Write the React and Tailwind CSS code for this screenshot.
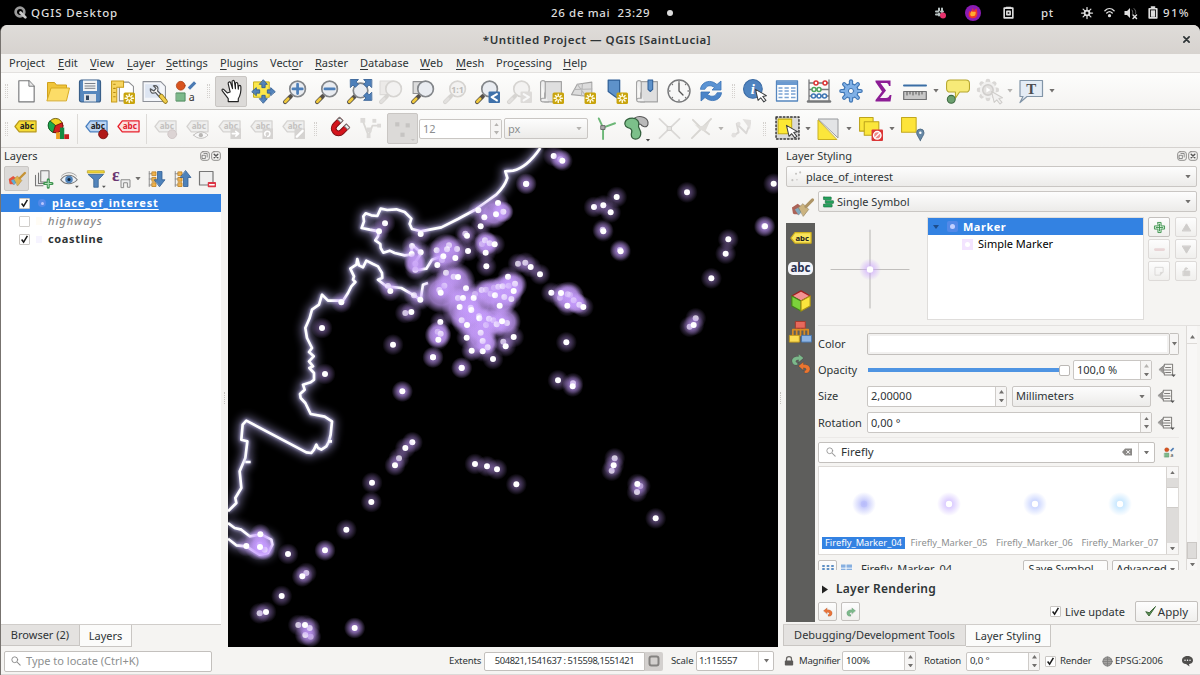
import React from 'react';

/* ---------- primitives ---------- */

function Svg({ children, className = 'h-[25px] w-[25px]', box = '0 0 24 24' }) {
  return (
    <svg viewBox={box} className={'block shrink-0 overflow-visible ' + className} fill="none" strokeLinecap="round" strokeLinejoin="round">
      {children}
    </svg>
  );
}

const Cell = ({ w = 'w-8', children, on }) => (
  <div className={'flex h-[31px] shrink-0 items-center justify-center ' + w + (on ? ' rounded-[2px] border border-[#c9c6c3] bg-[#dcdad8]' : '')}>{children}</div>
);

const Handle = ({ w = 'w-[13px]' }) => (
  <div className={'flex h-[14px] shrink-0 justify-center gap-px ' + w}>
    <div className="border-l border-dotted border-[#d4d1ce]" />
    <div className="border-l border-dotted border-[#d4d1ce]" />
  </div>
);

const Rule = () => (
  <div className="flex h-[30px] w-[5px] shrink-0 justify-center">
    <div className="w-px bg-[#dddbd8]" />
  </div>
);

const Tri = ({ up, dim, big }) => (
  <svg viewBox="0 0 6 4" className={'block shrink-0 ' + (big ? 'h-[3.5px] w-[6px]' : 'h-[3.5px] w-[5px]')}>
    <path d={up ? 'M0 4L3 0L6 4Z' : 'M0 0L3 4L6 0Z'} fill={dim ? '#b5b3b0' : '#72706e'} />
  </svg>
);

const Arrow = ({ w = 'w-[10px]', dim }) => (
  <div className={'flex shrink-0 items-center justify-center ' + w}><Tri dim={dim} big /></div>
);

const Check = ({ on = true }) => (
  <span className={'flex h-[11px] w-[11px] shrink-0 items-center justify-center rounded-[1px] border bg-white ' + (on ? 'border-[#c9c6c3]' : 'border-[#d0cecb]')}>
    {on && (
      <svg viewBox="0 0 10 10" className="h-[9px] w-[9px]" fill="none" stroke="#1b1b1b" strokeWidth="1.7">
        <path d="M1.8 5L4 8L8.2 1" />
      </svg>
    )}
  </span>
);

function Combo({ className, children, dim }) {
  return (
    <div className={'flex shrink-0 items-center justify-between rounded-[2px] border border-[#c9c6c3] bg-linear-to-b from-[#fdfdfd] to-[#ecebe9] pr-[5px] ' + className}>
      <div className="flex items-center">{children}</div>
      <Tri dim={dim} big />
    </div>
  );
}

function Spin({ className, children, dim, upDim }) {
  return (
    <div className={'flex shrink-0 items-stretch overflow-hidden rounded-[2px] border border-[#c9c6c3] bg-white ' + className}>
      <div className="flex flex-1 items-center pl-[3px]">{children}</div>
      <div className="flex w-[11px] flex-col items-center justify-center gap-[5px] border-l border-[#cfccc9] bg-[#f6f5f4]">
        <Tri up dim={dim || upDim} />
        <Tri dim={dim} />
      </div>
    </div>
  );
}

/* ---------- icon pieces ---------- */

const Lens = ({ dim, x = 14, y = 9.5, r = 7.5 }) => (
  <>
    <path d="M2 22L7.5 16.5" stroke={dim ? '#d6d4d1' : '#55504a'} strokeWidth="4" />
    <path d="M2.2 21.8L5 19" stroke={dim ? '#e2e0de' : '#f0c93c'} strokeWidth="2.6" />
    <circle cx={x} cy={y} r={r} fill={dim ? '#f3f2f1' : '#e9ecf1'} stroke={dim ? '#d6d4d1' : '#83868a'} strokeWidth="1.6" />
  </>
);

const Star = ({ x = 13, y = 13 }) => (
  <g transform={'translate(' + x + ' ' + y + ')'}>
    <rect width="11" height="11" rx="1.5" fill="#c9a40d" />
    <path d="M5.5 1.5V9.5M1.5 5.5H9.5M2.8 2.8L8.2 8.2M8.2 2.8L2.8 8.2" stroke="#fffbe0" strokeWidth="1.4" />
    <circle cx="5.5" cy="5.5" r="1.4" fill="#c9a40d" />
  </g>
);

function Tag({ fill, stroke, text = '#222', label = 'abc', children, className = 'h-[23px] w-[23px]' }) {
  return (
    <Svg className={className}>
      <path d="M1 12L5.5 6.200H23V17.500H5.500Z" fill={fill} stroke={stroke} strokeWidth="1.3" />
      <text x="13.3" y="15" fontSize="8.5" fontWeight="700" textAnchor="middle" fill={text} fontFamily="Noto Sans, sans-serif">{label}</text>
      {children}
    </Svg>
  );
}

const GreyTag = ({ children }) => <Tag fill="#efefee" stroke="#d5d3d1" text="#c3c1bf">{children}</Tag>;

const AbstractGlyph = ({ className }) => (
  <Svg className={className}>
    <circle cx="6" cy="6" r="4.6" fill="#d8541f" stroke="#a53b10" strokeWidth=".7" />
    <path d="M14.5 9L21 2.5" stroke="#4c7bb3" strokeWidth="3.4" strokeLinecap="butt" />
    <rect x="1.5" y="13.5" width="9" height="8.5" fill="#7db98a" stroke="#4d8a5c" strokeWidth="1" />
    <text x="14.3" y="22" fontSize="11" fill="#333" fontFamily="Noto Sans, sans-serif">a</text>
  </Svg>
);

const Gear = () => (
  <>
    {[0, 45, 90, 135].map((a) => (
      <path key={a} d="M12 2.300V21.700" transform={'rotate(' + a + ' 12 12)'} stroke="#3f75b3" strokeWidth="4.2" />
    ))}
    <circle cx="12" cy="12" r="7.200" fill="#7fb0e6" stroke="#3f75b3" strokeWidth="1.200" />
    {[0, 45, 90, 135].map((a) => (
      <path key={a} d="M12 2.500V21.500" transform={'rotate(' + a + ' 12 12)'} stroke="#7fb0e6" strokeWidth="2.2" />
    ))}
    <circle cx="12" cy="12" r="2.600" fill="#fafafa" stroke="#3f75b3" />
  </>
);

const Cursor = ({ x, y, dim }) => (
  <path d="M0 0L2.5 10.5L5 8L8 12L10 10.5L7 6.8L10.5 6Z" transform={'translate(' + x + ' ' + y + ')'} fill={dim ? '#f2f1f0' : '#fff'} stroke={dim ? '#cfcdca' : '#3e4042'} strokeWidth="1" />
);

const Abacus = () => (
  <Svg className="h-[24px] w-[24px]">
    <path d="M2 1V22M22 1V22M2 4H22M2 10.5H22M2 17H22" stroke="#77787a" strokeWidth="1.3" />
    <path d="M1 22.5H23" stroke="#77787a" strokeWidth="2.5" />
    {[[9, 4, '#d33'], [18, 4, '#d33'], [7, 10.5, '#4fa35c'], [12, 10.5, '#4fa35c'], [6.5, 17, '#3e76b5'], [12, 17, '#3e76b5'], [17.5, 17, '#3e76b5']].map(([x, y, c]) => (
      <circle key={x + '-' + y} cx={x} cy={y} r="2" fill="#fff" stroke={c} strokeWidth="1.5" />
    ))}
  </Svg>
);

const TableGlyph = () => (
  <Svg className="h-[24px] w-[24px]">
    <rect x="1.5" y="2" width="21" height="20" fill="#fff" stroke="#5586be" strokeWidth="1.3" />
    <rect x="2" y="2.5" width="20" height="3.5" fill="#6b9ad0" />
    <path d="M3.5 9H7.5M3.5 12H7.5M3.5 15H7.5M3.5 18.5H7.5M9.5 9H13.8M9.5 12H13.8M9.5 15H13.8M9.5 18.5H13.8M16 9H20.5M16 12H20.5M16 15H20.5M16 18.5H20.5" stroke="#79a3d3" strokeWidth="1.5" strokeLinecap="butt" />
  </Svg>
);

const Refresh = () => (
  <Svg className="h-[24px] w-[24px]">
    <path d="M1.5 10C2 4 9 .5 15 3.5L18 5.5L22 2V11H13L15.5 8.5C11.5 5.5 7.500 6.500 6 10Z" fill="#5b93d3" stroke="#3a72b5" strokeWidth=".8" />
    <path d="M22.500 14C22 20 15 23.500 9 20.500L6 18.500L2 22V13H11L8.500 15.500C12.500 18.500 16.500 17.500 18 14Z" fill="#4b84c8" stroke="#3a72b5" strokeWidth=".8" />
  </Svg>
);

const Scroll = ({ children }) => (
  <Svg>
    <path d="M5.500 3V22H21.500V2.500H5.500Z" fill="#dfdfdf" stroke="#a3a3a3" strokeWidth="1.100" />
    <path d="M1.500 3.500C1.500 1 6 1 6 3.500V18.500H3.500C1 18.500 1 22 3.500 22H9" fill="#efefef" stroke="#a3a3a3" strokeWidth="1.100" />
    <path d="M1.500 3.500V20" stroke="#a3a3a3" strokeWidth="1.100" />
    {children}
  </Svg>
);

/* ---------- toolbars ---------- */

function MainToolbar() {
  return (
    <div className="flex h-[37px] items-center border-b border-[#c9c7c4] bg-linear-to-b from-[#fdfdfc] to-[#f4f3f1] pl-[2px]">
      <Handle w="w-[7px]" />
      <Cell><Svg className="h-[23px] w-[23px]"><path d="M4 .8H14.500L20 6.500V22.800H4Z" fill="#fff" stroke="#77787a" strokeWidth="1.200" /><path d="M14.500 .8V6.500H20" fill="#e8e8e8" stroke="#77787a" /></Svg></Cell>
      <Cell><Svg className="h-[24px] w-[24px]"><path d="M1.500 20V3.500H8.500L10.500 6H20.500V10" fill="#f0c53a" stroke="#d0a11c" /><path d="M1 21.500L5 9H23.500L20.500 21.500Z" fill="#fcdc67" stroke="#d8ab24" /></Svg></Cell>
      <Cell><Svg className="h-[24px] w-[24px]"><rect x="1.500" y="1" width="21" height="22" rx="2" fill="#5687bd" stroke="#395f89" strokeWidth="1.200" /><rect x="5" y="1.500" width="14" height="10.500" fill="#f2f3f4" /><path d="M7 4.500H17M7 7H17M7 9.300H17" stroke="#7b8088" strokeWidth="1" /><rect x="6" y="15" width="12" height="7.500" fill="#dfe3e8" /><rect x="8" y="16.500" width="3" height="4.500" fill="#34475f" /></Svg></Cell>
      <Cell><Svg><path d="M9 3H18L22.500 7V21H9Z" fill="#fff" stroke="#8b8c8e" /><path d="M1.500 2H13V8H6.500V22H1.500Z" fill="#f7d560" stroke="#c79c1a" /><path d="M3.500 5H5M3.500 9H5M3.500 13H5M3.500 17H5" stroke="#b48a12" /><Star x={13} y={13} /></Svg></Cell>
      <Cell><Svg><path d="M1 2.500H18L22.500 7V21.500H1Z" fill="#f4f6fa" stroke="#8d9097" /><rect x="3" y="5" width="14" height="13" fill="#dde5f2" /><path d="M8 9.500C7.500 13 10 14.500 13 13L17 17.500L19 15.500L15 11.500C16.500 8 14 5.500 11 6.500L13.500 9L11.500 11.500Z" fill="#f6f6f6" stroke="#55585c" strokeWidth="1.200" /><path d="M18.500 16.500L22.500 21.500" stroke="#8f7412" strokeWidth="4.500" /><path d="M18.500 16.500L22.500 21.500" stroke="#f0cd4c" strokeWidth="3" /></Svg></Cell>
      <Cell><AbstractGlyph className="h-[23px] w-[23px]" /></Cell>
      <Handle />
      <Cell on><Svg><path d="M7 14L3.500 10.500C2 9 .8 10.800 2 12.200L8 20V23H18.500V20C21 16 21.500 12 21.200 7.500C21 5.500 19 5.700 18.800 7.500L18.500 10L18 4.500C17.800 2.500 15.500 2.700 15.500 4.500V9.500L14.500 2.200C14.200 .3 11.700 .7 12 2.700L12.500 9.500L10.500 3.500C9.800 1.700 7.500 2.500 8 4.500L10 13Z" fill="#fff" stroke="#222" strokeWidth="1.200" transform="translate(1.500 .5) scale(.92)" /></Svg></Cell>
      <Cell><Svg className="h-[23px] w-[23px]"><rect x="2" y="2" width="16" height="16" fill="#fbe74a" stroke="#c4ab16" /><g fill="#5283bb" stroke="#2d5b91" strokeWidth=".9"><path d="M12 0L16 4.500H13.700V8H10.300V4.500H8Z" /><path d="M12 24L16 19.500H13.700V16H10.300V19.500H8Z" /><path d="M0 12L4.500 8V10.300H8V13.700H4.500V16Z" /><path d="M24 12L19.500 8V10.300H16V13.700H19.500V16Z" /></g></Svg></Cell>
      <Cell><Svg><Lens /><path d="M14 5V14M9.500 9.500H18.500" stroke="#4d7fb9" strokeWidth="2.600" /></Svg></Cell>
      <Cell><Svg><Lens /><path d="M9.500 9.500H18.500" stroke="#4d7fb9" strokeWidth="2.600" /></Svg></Cell>
      <Cell><Svg><Lens x={13} y={11} r={7} /><g fill="#4d7fb9" stroke="#2f5c91" strokeWidth=".8"><path d="M3.500 .5H11L8.800 2.800L11 5L8 8L5.800 5.800L3.500 8Z" /><path d="M23.500 .5H16L18.200 2.800L16 5L19 8L21.200 5.800L23.500 8Z" /><path d="M23.500 20.500H16L18.200 18.200L16 16L19 13L21.200 15.200L23.500 13Z" /></g></Svg></Cell>
      <Cell><Svg><rect x="1" y="2" width="12" height="13" fill="#eceae8" stroke="#dcdad8" /><Lens dim /></Svg></Cell>
      <Cell><Svg><path d="M2 2.500H15V14H2Z" fill="#dcdcdc" stroke="#8f9092" /><Lens /></Svg></Cell>
      <Cell><Svg><Lens dim /><text x="14" y="13" fontSize="8.500" textAnchor="middle" fill="#c0bebb" fontWeight="700" fontFamily="Noto Sans, sans-serif">1:1</text></Svg></Cell>
      <Cell><Svg><Lens /><rect x="13" y="12" width="11" height="11" rx="1" fill="#3f71aa" /><path d="M21 14.500L16 17.500L21 20.500" stroke="#fff" strokeWidth="2" /></Svg></Cell>
      <Cell><Svg><Lens dim /><rect x="13" y="12" width="11" height="11" rx="1" fill="#dddbd9" /><path d="M16 14.500L21 17.500L16 20.500" stroke="#f8f8f8" strokeWidth="2" /></Svg></Cell>
      <Cell><Scroll><Star x={13} y={13} /></Scroll></Cell>
      <Cell><Svg><path d="M.5 15L6 5L20 3V17Z" fill="#dcdcdc" stroke="#a3a3a3" /><path d="M3.500 10L20 9.500M11 4.500L10 16M6 5L14 16" stroke="#b5b5b5" /><Star x={13} y={13} /></Svg></Cell>
      <Cell><Svg><path d="M5 1H16V20L10.500 16L5 12Z" fill="#5e92ca" stroke="#2f5f97" strokeWidth="1.200" /><Star x={13} y={13} /></Svg></Cell>
      <Cell><Scroll><path d="M12.500 1H17V10L14.700 12L12.500 10Z" fill="#5e92ca" stroke="#2f5f97" /></Scroll></Cell>
      <Cell><Svg className="h-[24px] w-[24px]"><circle cx="12" cy="12" r="11" fill="#f7f7f7" stroke="#77787a" strokeWidth="1.400" /><path d="M12 4V12L16 16" stroke="#555" strokeWidth="1.300" /><path d="M12 2.500V3M12 21V21.500M2.500 12H3M21 12H21.500M5.300 5.300L5.500 5.500M18.500 5.500L18.700 5.300M5.300 18.700L5.500 18.500M18.500 18.500L18.700 18.700" stroke="#777" strokeWidth="1.300" /></Svg></Cell>
      <Cell><Refresh /></Cell>
      <Handle w="w-[12px]" />
      <Cell><Svg><circle cx="9.500" cy="9.500" r="9" fill="#4f84c0" stroke="#3a6aa3" /><text x="9.500" y="14.500" fontSize="14" fontStyle="italic" fontWeight="700" textAnchor="middle" fill="#fff" fontFamily="Liberation Serif, serif">i</text><Cursor x={12} y={10} /></Svg></Cell>
      <Cell><TableGlyph /></Cell>
      <Cell><Abacus /></Cell>
      <Cell><Svg className="h-[24px] w-[24px]"><Gear /></Svg></Cell>
      <Cell><Svg className="h-[24px] w-[24px]"><path d="M4.500 1.500H19.500V7H18C17.500 4.500 16.500 4 14.500 4H9.500L15 11.500L9 19H15C17 19 18 18 18.800 16H20.500L19.500 22.500H4.500V21L11 12.500L4.500 3Z" fill="#8c1d95" /></Svg></Cell>
      <Cell><Svg className="h-[24px] w-[24px]"><path d="M1 6.500H23" stroke="#3a6ea5" strokeWidth="2" /><rect x=".7" y="12.500" width="22.600" height="8" fill="#c8c8c8" stroke="#707173" strokeWidth="1.200" /><path d="M4 13V16M7 13V15M10 13V16M13 13V15M16 13V16M19 13V15" stroke="#555" /></Svg></Cell>
      <Arrow />
      <Cell><Svg><path d="M5 1H20C22 1 23.500 2.500 23.500 4.500V9C23.500 11 22 12.500 20 12.500H14L10 18.500V12.500H5C3 12.500 1.500 11 1.500 9V4.500C1.500 2.500 3 1 5 1Z" fill="#f7ea78" stroke="#b5a62c" /><circle cx="6" cy="19.500" r="3.800" fill="#6ca06f" stroke="#3f6a43" /></Svg></Cell>
      <Cell><Svg>{[0, 45, 90, 135].map((a) => <path key={a} d="M10.500 2V19" transform={'rotate(' + a + ' 10.500 10.500)'} stroke="#dad8d6" strokeWidth="4.500" />)}<circle cx="10.500" cy="10.500" r="7.800" fill="#f1f0ef" /><circle cx="10.500" cy="10.500" r="5" fill="#e3e1df" stroke="#d0cecc" strokeWidth="1.500" /><path d="M9 8L13 10.500L9 13Z" fill="#fff" /><Cursor x={14} y={12} dim /></Svg></Cell>
      <Arrow dim />
      <Cell><Svg className="h-[24px] w-[24px]"><path d="M1 1.500H23.500V17.500H8L1 23.500L4 17.500H1Z" fill="#e4ecf5" stroke="#8295a8" strokeWidth="1.200" /><text x="12.300" y="15" fontSize="15" fontWeight="700" textAnchor="middle" fill="#4d4d4f" fontFamily="Liberation Serif, serif">T</text></Svg></Cell>
      <Arrow w="w-[9px]" />
    </div>
  );
}

function LabelToolbar() {
  return (
    <div className="flex h-[37px] items-center bg-linear-to-b from-[#fcfcfb] to-[#f4f3f1] pl-[2px]">
      <Handle w="w-[6px]" />
      <Cell><div className="mb-[5px]"><Tag fill="#f5dc35" stroke="#b8991a" /></div></Cell>
      <Cell w="w-[34px]"><Svg className="h-[23px] w-[23px]"><circle cx="9" cy="9" r="7.500" fill="#f2d321" stroke="#6b5a10" /><path d="M9 9L3 4A7.500 7.500 0 0 0 7 16.200Z" fill="#1ca84c" stroke="#115c2b" /><path d="M9 9L16 6A7.500 7.500 0 0 1 7 16.200Z" fill="#d22020" stroke="#7c1010" /><rect x="9.500" y="16" width="4" height="7" fill="#f0a020" /><rect x="13.500" y="11" width="4.500" height="12" fill="#158a42" /><rect x="18" y="18" width="5" height="5" fill="#c41f1f" /></Svg></Cell>
      <Rule />
      <Cell><div className="mb-[4px]"><Tag fill="#bcd5f3" stroke="#4a80c0"><circle cx="19" cy="20" r="4.800" fill="#b01818" stroke="#701010" strokeWidth=".8" /></Tag></div></Cell>
      <Cell><div className="mb-[5px]"><Tag fill="#fbe0e0" stroke="#e8202c" text="#e0202c" /></div></Cell>
      <Rule />
      <Cell><div className="mb-[4px]"><GreyTag><circle cx="19" cy="20" r="4.600" fill="#dcd4d4" stroke="#cfc7c7" /></GreyTag></div></Cell>
      <Cell><div className="mb-[4px]"><GreyTag><path d="M8 21C12 16.500 19 16.500 23 21C19 25.500 12 25.500 8 21Z" fill="#f7f7f7" stroke="#bfbdbb" /><circle cx="15.500" cy="21" r="2.200" fill="#b8b6b4" /></GreyTag></div></Cell>
      <Cell><div className="mb-[4px]"><GreyTag><rect x="13" y="14" width="11" height="11" fill="#d5d3d1" /><path d="M15 19.500H21M18.500 17L21.500 19.500L18.500 22" stroke="#fff" strokeWidth="1.700" /></GreyTag></div></Cell>
      <Cell><div className="mb-[4px]"><GreyTag><rect x="13" y="14" width="11" height="11" fill="#d5d3d1" /><path d="M16 21.500C14 18.500 17 16 20 17.500C22 19.500 20 22.500 18.500 22.500" stroke="#fff" strokeWidth="1.600" /></GreyTag></div></Cell>
      <Cell><div className="mb-[4px]"><GreyTag><rect x="13" y="14" width="11" height="11" fill="#d5d3d1" /><path d="M15.500 22.500L21.500 16.500" stroke="#fff" strokeWidth="2.400" /></GreyTag></div></Cell>
      <Handle />
      <Cell><Svg className="h-[23px] w-[23px]"><g transform="rotate(45 12 12)"><path d="M4.500 3V12A7.500 7.500 0 0 0 19.500 12V3H14.500V12A2.500 2.500 0 0 1 9.500 12V3Z" fill="#d5141c" stroke="#7d0b10" strokeWidth="1" /><path d="M4.500 3H9.500V6H4.500ZM14.500 3H19.500V6H14.500Z" fill="#f4f4f4" stroke="#777" /></g></Svg></Cell>
      <Cell w="w-[33px]"><Svg className="h-[23px] w-[23px]"><path d="M4 4L10 20L14 9H22" stroke="#dad8d5" strokeWidth="1.800" /><g fill="#dcdad8"><rect x="1.500" y="1" width="5" height="5" /><rect x="8" y="11" width="5" height="5" /><rect x="8" y="18" width="4" height="4" /><rect x="14" y="2" width="4" height="4" /><rect x="19" y="7" width="4" height="4" /></g></Svg></Cell>
      <Cell w="w-[31px]" on><Svg><g fill="#c6c4c2"><rect x="5" y="6" width="4" height="4" /><rect x="15" y="7" width="4" height="4" /><rect x="10" y="16" width="4" height="4" /><path d="M20 22H24L22 24Z" /></g></Svg></Cell>
      <Spin className="ml-px h-[20px] w-[83px] text-[#8b8e8f]" dim>12</Spin>
      <Combo className="ml-[2px] h-[21px] w-[84px] pl-[3px] text-[#8b8e8f]" dim>px</Combo>
      <Cell><Svg className="h-[23px] w-[23px]"><path d="M6 1.500L10.500 11L23 6.500M10.500 11V23" stroke="#6cb777" strokeWidth="2" /><rect x="8.500" y="9" width="4" height="4" fill="#aaa" stroke="#666" /></Svg></Cell>
      <Cell w="w-[33px]"><Svg><path d="M10 2C15 -1 24 1 23 8C22 12 17 10 16 8L10 8Z" fill="#b9b9b9" stroke="#555" /><path d="M8 2C13 2 15 6 14 9C13 12 17 13 16 18C15 23 7 24 7 18C7 15 9 14 6 12C2 11 0 9 1 6C2 3 5 2 8 2Z" fill="#7cc08a" stroke="#335f3d" strokeWidth="1.200" /><path d="M21 22H25L23 24.500Z" fill="#444" /></Svg></Cell>
      <Cell><Svg className="h-[23px] w-[23px]"><path d="M1.500 2L22.500 22M22.500 2L1.500 22" stroke="#dad8d6" strokeWidth="1.800" /><rect x="10" y="10" width="4" height="4" fill="#e5e4e2" stroke="#cfcdcb" /></Svg></Cell>
      <Cell><Svg className="h-[23px] w-[23px]"><path d="M3 3L12 12L22 2M12 12L2 22M12 12L20 18" stroke="#d8d6d2" strokeWidth="2" /><path d="M3 6C8 11 15 11 21 4L16 15L10 13Z" fill="#dfddd9" /></Svg></Cell>
      <Arrow w="w-2" dim />
      <Cell><Svg className="h-[23px] w-[23px]"><path d="M3 20L9 16L7 7L17 17L21 6" stroke="#dad8d6" strokeWidth="2" /><path d="M13 2L21 13L22 3Z" fill="#e2e0de" /><circle cx="4" cy="19" r="2.500" fill="#e2e0de" /><circle cx="9" cy="7" r="2" fill="#e2e0de" /></Svg></Cell>
      <Handle w="w-[14px]" />
      <Cell><Svg><rect x="1" y="1" width="22" height="21" fill="#d9d9d9" stroke="#333" strokeDasharray="1.500 2" strokeWidth="1.400" /><rect x="3" y="3" width="13" height="14" fill="#fde833" stroke="#c5ad10" /><Cursor x={11} y={9} /></Svg></Cell>
      <Arrow w="w-[9px]" />
      <Cell><Svg className="h-[24px] w-[24px]"><path d="M2.500 2H22V20.500Z" fill="#e3e4e6" stroke="#97999c" /><path d="M2 3.500V22.500H20.500Z" fill="#fbe63b" stroke="#c9b021" /></Svg></Cell>
      <Arrow />
      <Cell w="w-[33px]"><Svg><g fill="#fbe63b" stroke="#bda41c"><rect x="1.500" y="1.500" width="13" height="13" /><rect x="6" y="5.500" width="14" height="13" /></g><rect x="13" y="13" width="11" height="11" rx="1" fill="#db3636" /><circle cx="18.500" cy="18.500" r="3.600" fill="#e88" stroke="#fff" strokeWidth="1.300" /><path d="M16 21L21 16" stroke="#fff" strokeWidth="1.300" /></Svg></Cell>
      <Arrow w="w-[9px]" />
      <Cell><Svg><rect x="1.500" y="1.500" width="14" height="14" fill="#fde43a" stroke="#c2a81d" /><path d="M19.500 23.500C17 19 16 18 16 16A3.500 3.500 0 0 1 23 16C23 18 22 19 19.500 23.500Z" fill="#6688a6" stroke="#46637d" strokeWidth=".8" /><circle cx="19.500" cy="16" r="1.200" fill="#fff" /></Svg></Cell>
    </div>
  );
}

/* ---------- map ---------- */
/* Map coordinates are thirds of a pixel. Point: [x, y, glow strength]. */

const COAST = [
  'M937 0C915 32 885 62 855 68L832 70L838 90C830 115 815 130 805 140L770 165L740 186L690 213L640 238L578 250L552 243L545 228L550 212L530 192L505 184L478 186L458 182L448 204L430 202L413 196L406 205L408 220L401 240L425 245L453 250L450 265L442 277L457 288L458 300L466 314L485 308L500 315L530 322L550 320L552 290L580 315L560 345L565 366L595 362L612 335L640 325',
  'M600 405L585 410L578 455L558 442L520 420L475 415L450 395L463 390L462 375L450 355L435 348L415 338L405 358L393 352L388 333L385 350L367 362L378 385L375 395L382 402L370 415L360 435L345 458L300 458L282 440L273 470L252 485L245 510L232 540L237 570L252 600L243 612L257 625L243 640L255 655L244 660L258 675L258 695L248 703L225 710L230 725L216 738L218 750L232 765L248 798L290 806L312 820L308 860L303 880L295 895L280 905L270 900L265 890L258 905L250 915L235 913L55 818L44 830L40 875L58 880L52 930L35 970L40 1020L22 1050L25 1065L0 1090',
  'M52 942H68M300 880H312M0 1125L20 1140L40 1145L65 1165L100 1160L130 1175L133 1190L120 1215L95 1220L55 1195L25 1192L0 1172',
];

const PLACES = [
  [471, 226, 1], [453, 250, 1], [578, 258, 1], [552, 294, 1], [578, 313, 1], [551, 318, 1], [562, 347, 1], [562, 365, 1], [480, 414, 1], [487, 429, 1], [558, 442, 1], [577, 455, 1],
  [340, 463, 1], [282, 540, 1], [291, 678, 1], [532, 495, 1], [550, 492, 1], [495, 590, 1], [523, 730, 1.8], [615, 628, 1], [701, 659, 1],
  [553, 883, 1.2], [532, 900, 1], [513, 931, 1], [501, 952, 1.2], [432, 1004, 1], [430, 1062, 1], [355, 1145, 1], [291, 1207, 1.8], [180, 1218, 1], [235, 1275, 1], [223, 1285, 1.3], [161, 1344, 1], [95, 1396, 1], [114, 1392, 1],
  [380, 1440, 1.8], [248, 1466, 1.5], [232, 1461, 1.5], [245, 1440, 1.5], [211, 1431, 1], [231, 1431, 1], [741, 948, 1], [777, 955, 1], [807, 964, 1],
  [95, 1190, 4], [110, 1205, 2], [55, 1194, 1], [97, 1159, 1.4], [96, 1197, 2],
  [997, 34, 1.5], [977, 24, 1], [1003, 38, 1.4], [895, 107, 1], [1098, 177, 1], [1126, 172, 1], [1166, 147, 1], [1148, 193, 1], [1124, 245, 1], [1126, 250, 1], [1176, 306, 1.3], [1178, 310, 1.2],
  [1377, 133, 1], [1637, 107, 1], [1609, 235, 1.2], [1611, 235, 1.2], [1501, 274, 1], [1493, 317, 1], [1450, 391, 1], [1403, 511, 1], [1385, 536, 1], [1397, 531, 1.2],
  [1015, 583, 1], [990, 697, 1], [1035, 706, 1.2], [1034, 715, 1.2], [865, 1009, 1], [1160, 931, 1], [1151, 968, 1], [1157, 952, 1], [1237, 1014, 1], [1227, 1032, 1], [1228, 1008, 1], [1283, 1111, 1],
];

const TOWN_GLOW = [
  [185, 338, 62], [225, 308, 62], [200, 215, 54], [245, 385, 60], [270, 415, 58], [300, 440, 56], [290, 375, 58], [330, 340, 46], [380, 330, 50], [400, 315, 42], [365, 365, 45], [375, 425, 48], [340, 425, 50], [303, 475, 48], [320, 490, 34], [565, 352, 48], [340, 100, 46], [368, 95, 32], [318, 190, 36], [174, 465, 40], [105, 250, 34], [590, 370, 32],
];

const TOWN = [
  [354, 69, 1], [295, 91, 1], [370, 95, 1], [348, 103, 1], [313, 112, 1], [302, 139, 1], [256, 161, 1], [261, 167, 1], [306, 192, 1], [315, 181, 1], [329, 190, 1], [344, 193, 1], [317, 218, 1], [264, 213, 1], [319, 259, 1],
  [170, 211, 1], [231, 207, 1], [207, 196, 1], [201, 208, 1], [186, 240, 1], [190, 229, 1], [226, 234, 1], [172, 255, 1], [198, 278, 1], [193, 317, 1], [178, 330, 1], [182, 338, 1], [221, 290, 1], [234, 291, 1], [258, 325, 1],
  [234, 354, 1], [249, 354, 1], [285, 342, 1], [281, 354, 1], [239, 381, 1], [272, 383, 1], [274, 390, 1], [305, 330, 1], [318, 329, 1], [332, 341, 1], [342, 323, 1], [355, 320, 1], [368, 319, 1], [386, 317, 1], [345, 346, 1], [373, 351, 1], [384, 290, 1], [405, 311, 1], [394, 357, 1], [359, 377, 1], [401, 333, 1],
  [245, 421, 1], [261, 435, 1], [297, 409, 1], [298, 415, 1], [318, 435, 1], [327, 416, 1], [340, 421, 1], [381, 429, 1], [350, 433, 1], [366, 424, 1], [260, 473, 1], [302, 458, 1], [308, 483, 1], [323, 502, 1], [308, 514, 1], [275, 512, 1.5], [339, 537, 1], [370, 485, 1], [377, 499, 1], [401, 471, 1], [245, 564, 1],
  [181, 426, 1], [173, 455, 1], [182, 461, 1], [175, 479, 1], [159, 532, 1], [414, 251, 1], [436, 248, 1], [452, 261, 1], [480, 283, 1], [540, 353, 1], [570, 345, 1], [563, 343, 1], [514, 338, 1], [543, 339, 1], [581, 361, 1], [562, 377, 1], [598, 374, 1], [610, 381, 1], [438, 12, 1],
];

/* The more neighbours drawn after a point, the more its core is veiled by their glow. */
const coreOpacity = (list, i) => {
  const [x, y] = list[i];
  const later = list.slice(i + 1).filter(([a, b]) => Math.hypot(a - x, b - y) < 27).length;
  return Math.max(0.35, 1 - 0.25 * later);
};

const Points = ({ list }) =>
  list.map(([x, y, s], i) => (
    <g key={i}>
      <circle cx={x} cy={y} r={s > 3 ? 48 : 32} fill="url(#halo)" opacity={Math.min(1, 0.46 * s)} />
      <circle cx={x} cy={y} r="9" fill="#fff" opacity={coreOpacity(list, i)} />
    </g>
  ));

function MapCanvas() {
  return (
    <svg viewBox="0 0 1650 1497" preserveAspectRatio="none" className="block h-[499px] w-[550px] shrink-0 bg-black" fill="none">
      <defs>
        <radialGradient id="halo">
          <stop offset="0" stopColor="#c69cff" stopOpacity="1" />
          <stop offset=".4" stopColor="#c69cff" stopOpacity=".78" />
          <stop offset=".7" stopColor="#c69cff" stopOpacity=".4" />
          <stop offset="1" stopColor="#c69cff" stopOpacity="0" />
        </radialGradient>
        <radialGradient id="dense">
          <stop offset="0" stopColor="#c39af6" stopOpacity="1" />
          <stop offset=".6" stopColor="#c39af6" stopOpacity=".9" />
          <stop offset="1" stopColor="#c39af6" stopOpacity="0" />
        </radialGradient>
        <filter id="wide" x="-20%" y="-20%" width="140%" height="140%"><feGaussianBlur stdDeviation="15" /></filter>
        <filter id="tight" x="-20%" y="-20%" width="140%" height="140%"><feGaussianBlur stdDeviation="5" /></filter>
      </defs>
      {COAST.map((d) => (
        <g key={d} strokeLinejoin="round">
          <path d={d} stroke="#aaa3dc" strokeWidth="24" filter="url(#wide)" opacity=".65" />
          <path d={d} stroke="#bfb9ea" strokeWidth="12" filter="url(#tight)" opacity=".7" />
          <path d={d} stroke="#fff" strokeWidth="8" />
        </g>
      ))}
      <Points list={PLACES} />
      <g transform="translate(456 96)">
        {TOWN_GLOW.map(([x, y, r], i) => <circle key={i} cx={x} cy={y} r={r} fill="url(#dense)" opacity=".8" />)}
        <Points list={TOWN} />
      </g>
    </svg>
  );
}

/* ---------- shell ---------- */

const MENUS = [
  ['Pro', 'j', 'ect', 'w-[49px]'],
  ['', 'E', 'dit', 'w-[32px]'],
  ['', 'V', 'iew', 'w-[37px]'],
  ['', 'L', 'ayer', 'w-[39px]'],
  ['', 'S', 'ettings', 'w-[54px]'],
  ['', 'P', 'lugins', 'w-[50px]'],
  ['Vect', 'o', 'r', 'w-[45px]'],
  ['', 'R', 'aster', 'w-[45px]'],
  ['', 'D', 'atabase', 'w-[60px]'],
  ['', 'W', 'eb', 'w-[36px]'],
  ['', 'M', 'esh', 'w-[40px]'],
  ['Pro', 'c', 'essing', 'w-[67px]'],
  ['', 'H', 'elp', 'w-[40px]'],
];

function TopBar() {
  return (
    <div className="flex h-[25px] shrink-0 items-center bg-black text-[11.500px] font-medium tracking-[.65px] text-[#dcdcdc]">
      <div className="flex w-[551px] items-center gap-[4px] pl-[14px] tracking-[.9px]">
        <Svg className="h-[13px] w-[13px]"><circle cx="11" cy="11" r="8" stroke="#9b9b9b" strokeWidth="5" /><path d="M12 12L21 21" stroke="#c9c9c9" strokeWidth="5" /></Svg>
        QGIS Desktop
      </div>
      <div className="flex w-[383px] items-center gap-[17px]">26 de mai&nbsp; 23:29<span className="h-[6px] w-[6px] rounded-full bg-[#dcdcdc]" /></div>
      <div className="flex flex-1 items-center">
        <div className="w-[31px]"><Svg className="h-[12px] w-[13px]"><path d="M9 3V18M15 3V14M3 9H18M3 15H14" stroke="#b9c4c4" strokeWidth="4" strokeDasharray="4 6" /><circle cx="17" cy="17" r="6" fill="#e5316c" /></Svg></div>
        <div className="w-[38px]"><Svg className="h-[16px] w-[16px]"><circle cx="12" cy="12" r="12" fill="#8a1bb4" /><path d="M12 20C5 20 4 13 7 9L9 11L12 4L13 9L17 5C20 13 19 20 12 20Z" fill="#f0342c" /><path d="M11 17C7 17 7 13 10 9C12 12 17 8 16 12C16 15 15 17 11 17Z" fill="#ffab2e" /></Svg></div>
        <div className="w-[38px]"><Svg className="h-[13px] w-[11px]" box="0 0 20 24"><rect x="2" y="4" width="16" height="18" stroke="#ddd" strokeWidth="3" /><path d="M6 3H14M7 10H13V16H7Z" stroke="#ddd" strokeWidth="3" /></Svg></div>
        <div className="w-[40px]">pt</div>
        <div className="w-[23px]"><Svg className="h-[12px] w-[12px]">{[0, 45, 90, 135].map((a) => <path key={a} d="M12 1V23" transform={'rotate(' + a + ' 12 12)'} stroke="#ddd" strokeWidth="2.500" />)}<circle cx="12" cy="12" r="6.500" fill="#ddd" /><circle cx="12" cy="12" r="3" fill="#000" /></Svg></div>
        <div className="w-[20px]"><Svg className="h-[11px] w-[11px]"><path d="M2 8C8 2 16 2 22 8M6 13C10 9 14 9 18 13" stroke="#ddd" strokeWidth="3" /><circle cx="12" cy="19" r="3.500" fill="#ddd" /></Svg></div>
        <div className="w-[24px]"><Svg className="h-[12px] w-[14px]" box="0 0 28 24"><path d="M1 8H6L12 2V22L6 16H1Z" fill="#ddd" /><path d="M16 6C18 9 18 12 17 14M20 3C24 7 24 11 23 13" stroke="#666" strokeWidth="2" /><path d="M18 16L25 23M25 16L18 23" stroke="#ddd" strokeWidth="3" /></Svg></div>
        <div className="w-[15px]"><Svg className="h-[13px] w-[10px]" box="0 0 18 24"><path d="M6 2H12M2 5H16V22H2Z" stroke="#ddd" strokeWidth="3" /><rect x="5" y="8" width="8" height="12" fill="#ddd" /></Svg></div>
        <span className="tracking-[1.300px]">91%</span>
      </div>
    </div>
  );
}

const DockHeader = ({ children, className = '' }) => (
  <div className={'flex h-[15px] shrink-0 items-center pl-[3px] ' + className}>
    <span className="flex-1">{children}</span>
    {['M8 4H17V14M4 9H12V18H4Z', 'M6 6L16 16M16 6L6 16'].map((d, i) => (
      <Svg key={d} className={'h-[10px] w-[10px] ' + (i ? 'ml-px' : '')} box="0 0 22 22"><rect x="1.500" y="1.500" width="19" height="19" rx="5" stroke="#858381" strokeWidth="2" /><path d={d} stroke="#555" strokeWidth={i ? 4 : 1.8} transform="translate(2.200 2.200) scale(.8)" /></Svg>
    ))}
  </div>
);

const Brush = ({ className }) => (
  <Svg className={className}>
    <path d="M1 12L7 8L12 12L8 20C6 18 3 20 2 18Z" fill="#e5543e" />
    <path d="M4 14L10 11L12 16L8 20Z" fill="#62b0d8" />
    <path d="M8 12L12.500 8L18.500 14L13 21Z" fill="#e2b24a" stroke="#9a7a3a" strokeWidth=".6" />
    <path d="M15.500 11L22.500 4" stroke="#c59235" strokeWidth="3.200" />
  </Svg>
);

const TreeArrow = ({ up }) => (
  <Svg className="h-[18px] w-[18px]"><path d="M3 2V22M3 5H8M3 12H8M3 20H8" stroke="#8d8d8d" strokeWidth="1.300" /><g fill="#f1b24a" stroke="#b97b17"><rect x="7" y="2.500" width="5" height="5" /><rect x="7" y="10" width="5" height="5" /><rect x="7" y="17" width="5" height="5" /></g><path d={up ? 'M17 1L24 10H20V22H14V10H10Z' : 'M17 22L24 13H20V2H14V13H10Z'} fill="#4e82ba" stroke="#2d5b91" /></Svg>
);

function LayersPanel() {
  return (
    <div className="flex w-[220px] shrink-0 flex-col">
      <DockHeader>Layers</DockHeader>
      <div className="flex h-[31px] items-center pl-[3px]">
        <Cell w="w-[25px] max-h-[25px]" on><Brush className="h-[18px] w-[18px]" /></Cell>
        <Cell w="w-[27px]"><Svg className="h-[18px] w-[18px]"><path d="M2 7V21H12M6 4V18H14M9 1H20V16H9Z" fill="#eee" stroke="#777" strokeWidth="1.400" /><path d="M19 13V23M14 18H24" stroke="#3f9450" strokeWidth="4" /><path d="M19 14V22M15 18H23" stroke="#a9dcb2" strokeWidth="1.500" /></Svg></Cell>
        <Cell w="w-[26px]"><Svg className="h-[18px] w-[18px]"><path d="M1 13C6 5 17 5 23 13C17 20 6 20 1 13Z" fill="#e9eff6" stroke="#777" strokeWidth="1.500" /><circle cx="12" cy="12.500" r="5" fill="#5183b8" /><circle cx="12" cy="12.500" r="2" fill="#123" /><path d="M2 8C7 2 17 2 22 8" stroke="#888" /><path d="M20 21H25L22.500 24Z" fill="#555" /></Svg></Cell>
        <Cell w="w-[27px]"><Svg className="h-[18px] w-[18px]"><path d="M1 1H23V4H1Z" fill="#f7df3e" stroke="#b69b18" /><path d="M2 6H22L15 13V23H9V13Z" fill="#5284bb" stroke="#325c8c" /><path d="M20 21H25L22.500 24Z" fill="#555" /></Svg></Cell>
        <Cell w="w-[24px]"><Svg className="h-[18px] w-[18px]"><text x="0" y="14" fontSize="24" fontWeight="700" fill="#6a3873" fontFamily="Liberation Serif, serif">ε</text><path d="M12 23V13H24V23H20.500V17H15.500V23Z" fill="#eee" stroke="#888" strokeWidth="1.300" /></Svg></Cell>
        <Arrow w="w-[9px]" />
        <Cell w="w-[27px]"><TreeArrow /></Cell>
        <Cell w="w-[26px]"><TreeArrow up /></Cell>
        <Cell w="w-[24px]"><Svg className="h-[18px] w-[18px]"><rect x="2" y="2" width="18" height="18" fill="#efefef" stroke="#777" strokeWidth="1.600" /><rect x="13" y="16" width="11" height="7" rx="1" fill="#dc3545" /><path d="M15.500 19.500H21.500" stroke="#fff" strokeWidth="2" /></Svg></Cell>
      </div>
      <div className="flex h-[430px] flex-col bg-white">
        <div className="flex h-[18px] items-center bg-[#3382e2] pl-[18px] font-bold tracking-[.83px] text-white">
          <Check /><span className="mr-[6px] ml-[8px] flex h-[8px] w-[8px] items-center justify-center rounded-full bg-[#5389e8]"><span className="h-[3px] w-[3px] rounded-full bg-[#b9c6ff]" /></span><span className="underline underline-offset-2">place_of_interest</span>
        </div>
        <div className="flex h-[18px] items-center pl-[18px] font-medium italic tracking-[.95px] text-[#8b8b8b]">
          <Check on={false} /><span className="mx-[6px] h-[8px] w-[6px] bg-[#fffcf5]" />highways
        </div>
        <div className="flex h-[18px] items-center pl-[18px] font-bold tracking-[.65px]">
          <Check /><span className="mx-[6px] h-[7px] w-[6px] bg-[#f6f4ff]" />coastline
        </div>
      </div>
      <div className="flex h-[23px] border-t border-[#d0cdca]">
        <div className="flex h-[21px] w-[79px] items-center justify-center border-b border-r border-[#c9c6c3] bg-[#e4e2e0]">Browser (2)</div>
        <div className="flex w-[52px] items-center justify-center border-b border-r border-[#c9c6c3] bg-[#fbfbfa] pt-px">Layers</div>
      </div>
    </div>
  );
}

const DataDefined = () => (
  <Svg className="h-[14px] w-[17px]" box="0 0 26 22"><path d="M0 10L7 4V16Z" fill="#9a9896" stroke="#777" /><path d="M8 2H21V19H8V15M8 5V2M10 7H18M7 11H19M10 15H18" stroke="#7f7d7b" strokeWidth="1.600" /><path d="M19 18H26L22.500 22Z" fill="#555" /></Svg>
);

const SquareButton = ({ children, dim, className = 'h-[20px] w-[22px]' }) => (
  <div className={'flex shrink-0 items-center justify-center rounded-[2px] border bg-linear-to-b from-[#fdfdfd] to-[#f0efed] ' + (dim ? 'border-[#dddad8] ' : 'border-[#c3c0bd] ') + className}>{children}</div>
);

const FormRow = ({ label, children, className = 'h-[26.300px]' }) => (
  <div className={'flex shrink-0 items-center ' + className}>
    <span className="w-[49px] shrink-0 whitespace-nowrap">{label}</span>
    {children}
  </div>
);

const Undo = ({ flip, fill, className = 'h-[14px] w-[14px]' }) => (
  <Svg className={className + (flip ? ' -scale-x-100' : '')}><path d="M1 9L10 2V6.500C18 6 23 10 22 16C21 21 17 23 12 22V18C16 18 17 13 10 12.500V17Z" fill={fill} stroke="#00000033" /></Svg>
);

const MARKERS = [
  ['04', '#aeb4fa', '#b9bdfb'],
  ['05', '#c9b3ff', '#fff'],
  ['06', '#b3c3ff', '#fff'],
  ['07', '#b0ddff', '#fff'],
];

const ListScroll = () => (
  <div className="flex w-[12px] shrink-0 flex-col items-center border-l border-[#d6d3d0] bg-[#f7f6f5]">
    <div className="flex h-[11px] items-center"><Tri up /></div>
    <div className="flex w-full flex-1 flex-col bg-[#dedcda] pt-[9px]"><div className="h-[21px] w-full border-y border-[#cfccc9] bg-white" /></div>
    <div className="flex h-[11px] items-center"><Tri /></div>
  </div>
);

function StylingForm() {
  return (
    <div className="flex h-[246px] overflow-hidden border-t border-[#e3e1df]">
      <div className="flex w-[361px] shrink-0 flex-col overflow-hidden pt-[5px]">
        <FormRow label="Color">
          <div className="h-[22px] w-[304px] rounded-[2px] border border-[#c3c0bd] bg-white p-[3px] shadow-[inset_0_0_0_2px_#f2f1f0]" />
          <div className="flex h-[22px] w-[9px] items-center justify-center rounded-r-[2px] border border-l-0 border-[#c3c0bd] bg-[#f6f5f4]"><Tri /></div>
        </FormRow>
        <FormRow label="Opacity">
          <div className="flex w-[206px] items-center pl-px"><div className="h-[4px] w-[191px] bg-[#4f94e2]" /><div className="h-[11px] w-[11px] rounded-[2px] border border-[#bbb8b5] bg-white" /></div>
          <Spin className="h-[20px] w-[79px]" upDim>100,0 %</Spin>
          <span className="ml-[7px]"><DataDefined /></span>
        </FormRow>
        <FormRow label="Size">
          <Spin className="h-[21px] w-[140px]">2,00000</Spin>
          <Combo className="ml-[5px] h-[21px] w-[139px] pl-[3px]">Millimeters</Combo>
          <span className="ml-[7px]"><DataDefined /></span>
        </FormRow>
        <FormRow label="Rotation">
          <Spin className="h-[21px] w-[285px]">0,00 °</Spin>
          <span className="ml-[6px]"><DataDefined /></span>
        </FormRow>
        <div className="mt-px flex h-[29px] shrink-0 items-start border-t border-[#ebe9e7] pt-[4px]">
          <div className="flex h-[21px] w-[337px] items-center rounded-[2px] border border-[#c3c0bd] bg-white pl-[7px]">
            <Svg className="mr-[5px] h-[10px] w-[10px]"><circle cx="9" cy="9" r="7" stroke="#999" strokeWidth="2.200" /><path d="M15 15L22 22" stroke="#999" strokeWidth="2.500" /></Svg>
            <span className="flex-1 text-[11.500px]">Firefly</span>
            <Svg className="mr-[6px] h-[8px] w-[10px]" box="0 0 26 20"><path d="M0 10L8 1H26V19H8Z" fill="#8b8987" /><path d="M12 6L20 14M20 6L12 14" stroke="#fff" strokeWidth="2.500" /></Svg>
            <span className="flex h-full w-[16px] items-center justify-center border-l border-[#d6d3d0]"><Tri /></span>
          </div>
          <span className="ml-[9px] mt-[5px]"><AbstractGlyph className="h-[11px] w-[11px]" /></span>
        </div>
        <div className="flex h-[89px] shrink-0 border border-[#dddad7] bg-white">
          <div className="grid flex-1 grid-cols-[85px_86px_85px_86px] pl-[2px]">
            {MARKERS.map(([n, glow, core], i) => (
              <div key={n} className="flex flex-col items-center pt-[25px]">
                <Svg className="h-[24px] w-[24px]">
                  <defs>
                    <radialGradient id={'m' + n}>
                      <stop offset="0" stopColor={glow} stopOpacity=".95" />
                      <stop offset=".45" stopColor={glow} stopOpacity=".5" />
                      <stop offset="1" stopColor={glow} stopOpacity="0" />
                    </radialGradient>
                  </defs>
                  <circle cx="12" cy="12" r="12" fill={'url(#m' + n + ')'} />
                  <circle cx="12" cy="12" r="3.200" fill={core} opacity={i ? 1 : 0.6} />
                </Svg>
                <span className={'mt-[21px] flex h-[12px] items-center whitespace-nowrap px-[3px] text-[9.300px] ' + (i ? 'text-[#8d8f90]' : 'bg-[#3382e2] text-white')}>{'Firefly_Marker_' + n}</span>
              </div>
            ))}
          </div>
          <ListScroll />
        </div>
        <div className="mt-[5px] flex shrink-0 items-start text-[11px] leading-[14px]">
          <SquareButton className="h-[20px] w-[19px] bg-[#dcdad8]"><Svg className="h-[12px] w-[12px]"><path d="M2 4H22M2 10H22M2 16H22" stroke="#5d8ec4" strokeWidth="4" strokeDasharray="2 7" /></Svg></SquareButton>
          <Svg className="mt-[4px] ml-[4px] h-[12px] w-[11px]"><rect width="24" height="20" fill="#86afe0" /><path d="M0 8H24M11 0V20" stroke="#fff" strokeWidth="2" /></Svg>
          <span className="mt-[2px] ml-[9px] w-[162px]">Firefly_Marker_04</span>
          <div className="flex h-[22px] w-[85px] items-start justify-center whitespace-nowrap rounded-[2px] border border-[#c3c0bd] bg-[#fcfcfb] pt-px">Save Symbol…</div>
          <div className="ml-[4px] flex h-[22px] w-[67px] items-start justify-center rounded-[2px] border border-[#c3c0bd] bg-[#fcfcfb] pt-px"><span className="mr-[3px]">Advanced</span><span className="mt-[6px]"><Tri /></span></div>
        </div>
      </div>
      <div className="ml-[7px] flex w-[11px] flex-col items-center border-l border-[#dddad7] bg-[#f8f7f6]">
        <div className="mt-[6px] flex h-[11px] items-center"><Tri up /></div>
        <div className="flex w-full flex-1 flex-col justify-end border-t border-[#dddad7]"><div className="h-[17px] border border-[#cbc8c5] bg-[#dedcda]" /></div>
        <div className="flex h-[11px] items-center"><Tri /></div>
      </div>
    </div>
  );
}

function SideStrip() {
  return (
    <div className="flex w-[29px] shrink-0 flex-col">
      <div className="flex h-[32px] items-center justify-center pl-[4px]"><Brush className="h-[23px] w-[23px] saturate-50" /></div>
      <div className="flex flex-1 flex-col items-center bg-[#5e5e5c] pt-[3px]">
        <div className="flex h-[24px] items-center"><Tag fill="#f9e45a" stroke="#d3b31e" className="h-[22px] w-[22px]" /></div>
        <div className="flex h-[37px] items-center">
          <span className="flex h-[13px] items-center rounded-[5px] bg-[#f4f5fa] px-[2px] pb-px text-[11.500px] font-bold text-[#28304f]">abc</span>
        </div>
        <div className="flex h-[28px] items-center"><Svg className="h-[22px] w-[22px]"><path d="M12 1L22 6.500L12 12L2 6.500Z" fill="#f49292" stroke="#a02020" strokeWidth="1.400" /><path d="M2 6.500L12 12V23L2 17.500Z" fill="#7cd23b" stroke="#45801b" strokeWidth="1.300" /><path d="M22 6.500L12 12V23L22 17.500Z" fill="#fae43d" stroke="#a89116" strokeWidth="1.300" /></Svg></div>
        <div className="flex h-[34px] items-center"><Svg className="h-[23px] w-[23px]"><path d="M8 7V16M16 7V16M12 8V15M4 16V9H20V16" stroke="#d98b22" strokeWidth="1.800" /><rect x="7" y=".5" width="10" height="7" fill="#e8695c" stroke="#a83a2c" /><rect x=".8" y="15" width="10" height="7" fill="#fbdc54" stroke="#c49c1c" /><rect x="13.500" y="15" width="10" height="7" fill="#8db4e4" stroke="#4a77af" /></Svg></div>
        <div className="mt-[4px] flex flex-col"><Undo flip fill="#7cb98b" className="h-[13px] w-[13px]" /><Undo fill="#ea7530" className="-mt-[5px] ml-[7px] h-[13px] w-[13px]" /></div>
      </div>
    </div>
  );
}

const STACK_BUTTONS = [
  ['M12 2V22M2 12H22', '#3f9450', false], ['M3 19L12 4L21 19Z', '#cfcdcb', true],
  ['M3 12H21', '#e9d5d6', true], ['M3 5L12 20L21 5Z', '#cfcdcb', true],
  ['M3 3H20V14H14V20H3Z', '#dad8d6', true], ['M5 11H19V21H5ZM8 11V7C8 3 14 3 15 6', '#d3d1cf', true],
];

function StylingPanel() {
  return (
    <div className="flex w-[417px] shrink-0 flex-col">
      <DockHeader className="pr-[2px]">Layer Styling</DockHeader>
      <Combo className="mt-[3px] ml-[3px] h-[21px] w-[411px] pl-[4px]"><Svg className="mr-[4px] h-[11px] w-[11px]"><g fill="#c5c3c1"><circle cx="3" cy="20" r="2.300" /><circle cx="13" cy="19" r="1.600" /><circle cx="11" cy="6" r="2.300" /><circle cx="20" cy="3" r="2.300" /></g></Svg>place_of_interest</Combo>
      <div className="mt-[4px] ml-[3px] flex h-[431px]">
        <SideStrip />
        <div className="ml-[3px] flex flex-1 flex-col">
          <Combo className="h-[21px] w-[379px] pl-[4px]"><Svg className="mr-[3px] h-[12px] w-[11px]"><g fill="#23a35c" stroke="#0e6535" strokeWidth="1.200"><rect x="1" y="1" width="17" height="6" rx="1" /><rect x="5" y="9" width="18" height="6" rx="1" /><rect x="1" y="17" width="19" height="6" rx="1" /></g></Svg>Single Symbol</Combo>
          <div className="flex h-[113px] pt-[5px]">
            <div className="flex w-[109px] pl-[12px] pt-[12px]">
              <Svg className="h-[80px] w-[80px]" box="0 0 80 80"><path d="M40 1V79M1 40.500H79" stroke="#c0bebc" strokeWidth="1.200" /><circle cx="40" cy="40.500" r="11" fill="url(#halo)" opacity=".6" /><circle cx="40" cy="40.500" r="3.200" fill="#fff" /></Svg>
            </div>
            <div className="h-[103px] w-[217px] border border-[#dfdddb] bg-white">
              <div className="flex h-[17px] items-center bg-[#3382e2] pl-[5px] font-bold tracking-[.5px] text-white"><svg viewBox="0 0 6 4" className="h-[4px] w-[6px]"><path d="M0 0H6L3 4Z" fill="#1d4d8b" /></svg><span className="mr-[5px] ml-[8px] flex h-[11px] w-[11px] items-center justify-center rounded-[2px] bg-[#5389e8]"><span className="h-[5px] w-[5px] rounded-full bg-[#c3d0ff]" /></span>Marker</div>
              <div className="flex h-[18px] items-center pl-[34px] text-black"><span className="mr-[5px] flex h-[11px] w-[11px] items-center justify-center bg-[#f3e4ff]"><span className="h-[5px] w-[5px] rounded-full bg-white" /></span>Simple Marker</div>
            </div>
            <div className="ml-[4px] grid grid-cols-[22px_22px] content-start gap-x-[5px] gap-y-[2px]">
              {STACK_BUTTONS.map(([d, c, dim], i) => (
                <SquareButton key={d} dim={dim}>
                  <Svg className="h-[11px] w-[11px]">
                    {i === 0 ? <><path d="M8.500 1H15.500V8.500H23V15.500H15.500V23H8.500V15.500H1V8.500H8.500Z" fill="#d5ecd8" stroke={c} strokeWidth="2" /><path d="M12 5V19M5 12H19" stroke={c} strokeWidth="2" /></> : <path d={d} stroke={c} strokeWidth={i === 2 ? 6 : 2} fill={i === 1 || i === 3 || i === 5 ? c : 'none'} />}
                    {i === 4 && <path d="M14 20V14H20Z" fill={c} />}
                  </Svg>
                </SquareButton>
              ))}
            </div>
          </div>
          <StylingForm />
          <div className="flex h-[31px] items-center pt-[7px] text-[12px] font-semibold tracking-[.25px]"><svg viewBox="0 0 6 8" className="mr-[8px] ml-[4px] h-[9px] w-[6px]"><path d="M0 0L6 4L0 8Z" fill="#222" /></svg>Layer Rendering</div>
          <div className="flex h-[21px] items-center">
            <SquareButton className="h-[19px] w-[19px]"><Undo fill="#e8743b" className="h-[10px] w-[10px]" /></SquareButton>
            <SquareButton className="ml-[4px] h-[19px] w-[19px]"><Undo flip fill="#7cb98b" className="h-[10px] w-[10px]" /></SquareButton>
            <span className="ml-[190px]"><Check /></span>
            <span className="ml-[4px] flex-1 whitespace-nowrap">Live update</span>
            <SquareButton className="mr-[2px] h-[21px] w-[63px] text-[11.500px]"><Svg className="mr-px h-[13px] w-[12px]"><path d="M2 13L8 21L21 2L9 14Z" fill="#5e8f57" stroke="#3f6a3b" strokeWidth="2" /></Svg>Apply</SquareButton>
          </div>
        </div>
      </div>
      <div className="mt-[2px] flex h-[23px] items-start border-t border-[#d0cdca]">
        <div className="flex h-[21px] w-[183px] items-center justify-center border-x border-b border-[#c9c6c3] bg-[#e4e2e0]">Debugging/Development Tools</div>
        <div className="flex h-[22px] w-[85px] items-center justify-center border-b border-r border-[#c9c6c3] bg-[#fbfbfa] pt-px">Layer Styling</div>
      </div>
    </div>
  );
}

function StatusBar() {
  return (
    <div className="flex h-[27px] shrink-0 items-center border-b border-[#dcdad8] pl-[3px] text-[9.600px] tracking-[-.15px]">
      <div className="flex h-[21px] w-[208px] items-center rounded-[2px] border border-[#c3c0bd] bg-white pl-[6px] text-[11px] tracking-normal text-[#8d8f90]">
        <Svg className="mr-[5px] h-[10px] w-[10px]"><circle cx="9" cy="9" r="7" stroke="#888" strokeWidth="2.200" /><path d="M15 15L22 22" stroke="#888" strokeWidth="2.500" /></Svg>
        Type to locate (Ctrl+K)
      </div>
      <span className="ml-[237px] w-[35px] whitespace-nowrap">Extents</span>
      <div className="flex h-[19px] w-[161px] items-center justify-center whitespace-nowrap rounded-l-[2px] border border-[#c3c0bd] bg-white text-[9.400px] tracking-[-.4px]">504821,1541637 : 515598,1551421</div>
      <div className="flex h-[19px] w-[18px] items-center justify-center rounded-r-[2px] bg-[#d3d0ce]"><Svg className="h-[12px] w-[12px]"><rect x="3" y="3" width="18" height="18" rx="4" stroke="#858381" strokeWidth="4" fill="#d3d0ce" /></Svg></div>
      <span className="ml-[8px] w-[25px]">Scale</span>
      <div className="flex h-[20px] w-[78px] items-center rounded-[2px] border border-[#c3c0bd] bg-white pl-[2px]"><span className="flex-1 tracking-[-.35px]">1:115557</span><span className="flex h-full w-[15px] items-center justify-center border-l border-[#d6d3d0]"><Tri /></span></div>
      <Svg className="mr-[5px] ml-[10px] h-[12px] w-[10px]"><path d="M6 11V7C6 0 18 0 18 7V11" stroke="#6a6866" strokeWidth="3" /><rect x="2" y="11" width="20" height="12" rx="2" fill="#5c5a58" /></Svg>
      <span className="w-[43px] whitespace-nowrap tracking-[-.25px]">Magnifier</span>
      <Spin className="h-[20px] w-[74px]">100%</Spin>
      <span className="ml-[8px] w-[42px]">Rotation</span>
      <Spin className="h-[19px] w-[74px]">0,0 °</Spin>
      <span className="mr-[4px] ml-[5px]"><Check /></span>
      <span className="w-[42px]">Render</span>
      <Svg className="mr-[2px] h-[11px] w-[11px]"><circle cx="12" cy="12" r="10" fill="#a5a3a1" stroke="#777" strokeWidth="2" /><path d="M2 12H22M12 2V22M4 7H20M4 17H20" stroke="#777" strokeWidth="1.500" /></Svg>
      <span className="w-[66px] whitespace-nowrap tracking-normal">EPSG:2006</span>
      <Svg className="h-[12px] w-[13px]"><path d="M12 2C18 2 23 5 23 11C23 16 18 18 15 18L16 23L9 18C4 18 1 15 1 11C1 5 6 2 12 2Z" fill="#4f4e4c" /><path d="M7 10.500H7.100M12 10.500H12.100M17 10.500H17.100" stroke="#fff" strokeWidth="2.800" /></Svg>
    </div>
  );
}

export default function App() {
  return (
    <div className="flex h-[675px] w-[1200px] flex-col overflow-hidden bg-black font-['Noto_Sans',sans-serif] text-[11px] leading-[14px] text-[#2e3436]">
      <TopBar />
      <div className="flex flex-1 flex-col rounded-t-[7px] border-l border-[#77736f] bg-[#f5f4f2]">
        <div className="flex h-[29px] shrink-0 items-center rounded-t-[7px] bg-linear-to-b from-[#dfdcd9] to-[#d7d3cf] pr-[10px]">
          <div className="flex-1 pl-[10px] text-center text-[11.500px] font-semibold tracking-[.55px]">*Untitled Project — QGIS [SaintLucia]</div>
          <Svg className="h-[7px] w-[7px]"><path d="M3 3L21 21M21 3L3 21" stroke="#2e3436" strokeWidth="6" /></Svg>
        </div>
        <div className="flex h-[19px] shrink-0 items-center border-b border-[#e3e1df] pl-[8px]">
          {MENUS.map(([a, b, c, w]) => (
            <span key={a + b + c} className={'shrink-0 whitespace-nowrap ' + w}>{a}<span className="underline underline-offset-2">{b}</span>{c}</span>
          ))}
        </div>
        <MainToolbar />
        <LabelToolbar />
        <div className="h-px shrink-0 bg-[#d5d2cf]" />
        <div className="flex h-[500px] shrink-0">
          <LayersPanel />
          <div className="flex w-[7px] items-center justify-center"><div className="h-[12px] border-l border-dotted border-[#c4c1be]" /></div>
          <MapCanvas />
          <div className="flex w-[5px] items-center justify-center"><div className="h-[12px] border-l border-dotted border-[#c4c1be]" /></div>
          <StylingPanel />
        </div>
        <StatusBar />
      </div>
    </div>
  );
}
